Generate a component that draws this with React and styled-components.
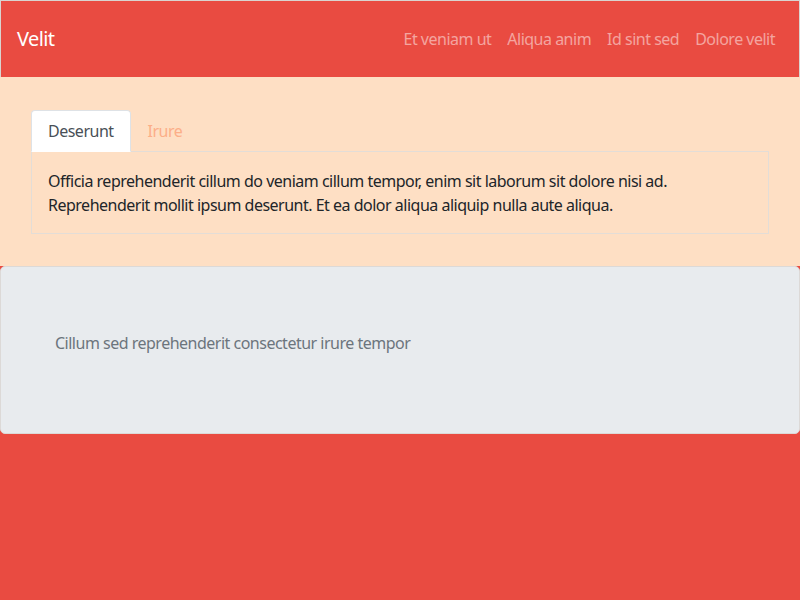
import { useState } from "react";
import styled, { createGlobalStyle } from "styled-components";

const GlobalStyle = createGlobalStyle`
  * { box-sizing: border-box; }
  body {
    margin: 0;
    font-family: "Noto Sans", "Open Sans", sans-serif;
    font-size: 16px;
    line-height: 1.5;
    letter-spacing: -0.5px;
    color: #212529;
    background: #e94b41;
  }
`;

const Navbar = styled.nav`
  display: flex;
  align-items: center;
  justify-content: space-between;
  height: 77px;
  padding: 0 16px;
  background: #e94b41;
  border: 1px solid #d9d4d0;
  border-bottom: none;
`;

const Brand = styled.a`
  color: #fff;
  font-size: 20px;
  letter-spacing: -0.6px;
  text-decoration: none;
`;

const NavLinks = styled.div`
  display: flex;
`;

const NavLink = styled.a`
  padding: 8px;
  color: rgba(255, 255, 255, 0.5);
  text-decoration: none;
`;

const TabSection = styled.section`
  background: #fedfc4;
  padding: 33px 31px 32px;
`;

const TabList = styled.div`
  display: flex;
`;

const Tab = styled.button`
  font: inherit;
  letter-spacing: inherit;
  padding: 8px 16px;
  margin-bottom: -1px;
  border: 1px solid ${(p) => (p.$active ? "#dee2e6" : "transparent")};
  border-bottom-color: ${(p) => (p.$active ? "#fff" : "transparent")};
  border-top-left-radius: 4px;
  border-top-right-radius: 4px;
  background: ${(p) => (p.$active ? "#fff" : "transparent")};
  color: ${(p) => (p.$active ? "#495057" : "#fcae88")};
  cursor: pointer;
`;

const TabPanel = styled.div`
  border: 1px solid #e3ddd7;
  padding: 17px 16px 16px;
  color: #212529;
  p { margin: 0; }
`;

const Jumbotron = styled.section`
  background: #e8ebee;
  border: 1px solid #dcd9d7;
  border-radius: 5px;
  padding: 64px 54px 62px;
  p {
    margin: 0 0 16px;
    color: #6c757d;
  }
`;

const Footer = styled.footer`
  height: 166px;
  background: #e94b41;
`;

const tabs = {
  Deserunt:
    "Officia reprehenderit cillum do veniam cillum tempor, enim sit laborum sit dolore nisi ad. Reprehenderit mollit ipsum deserunt. Et ea dolor aliqua aliquip nulla aute aliqua.",
  Irure: "Irure dolor in reprehenderit in voluptate velit esse cillum dolore.",
};

export default function App() {
  const [active, setActive] = useState("Deserunt");
  return (
    <>
      <GlobalStyle />
      <Navbar>
        <Brand href="#">Velit</Brand>
        <NavLinks>
          <NavLink href="#">Et veniam ut</NavLink>
          <NavLink href="#">Aliqua anim</NavLink>
          <NavLink href="#">Id sint sed</NavLink>
          <NavLink href="#">Dolore velit</NavLink>
        </NavLinks>
      </Navbar>
      <TabSection>
        <TabList>
          {Object.keys(tabs).map((t) => (
            <Tab key={t} $active={t === active} onClick={() => setActive(t)}>
              {t}
            </Tab>
          ))}
        </TabList>
        <TabPanel>
          <p>{tabs[active]}</p>
        </TabPanel>
      </TabSection>
      <Jumbotron>
        <p>Cillum sed reprehenderit consectetur irure tempor</p>
      </Jumbotron>
      <Footer />
    </>
  );
}
